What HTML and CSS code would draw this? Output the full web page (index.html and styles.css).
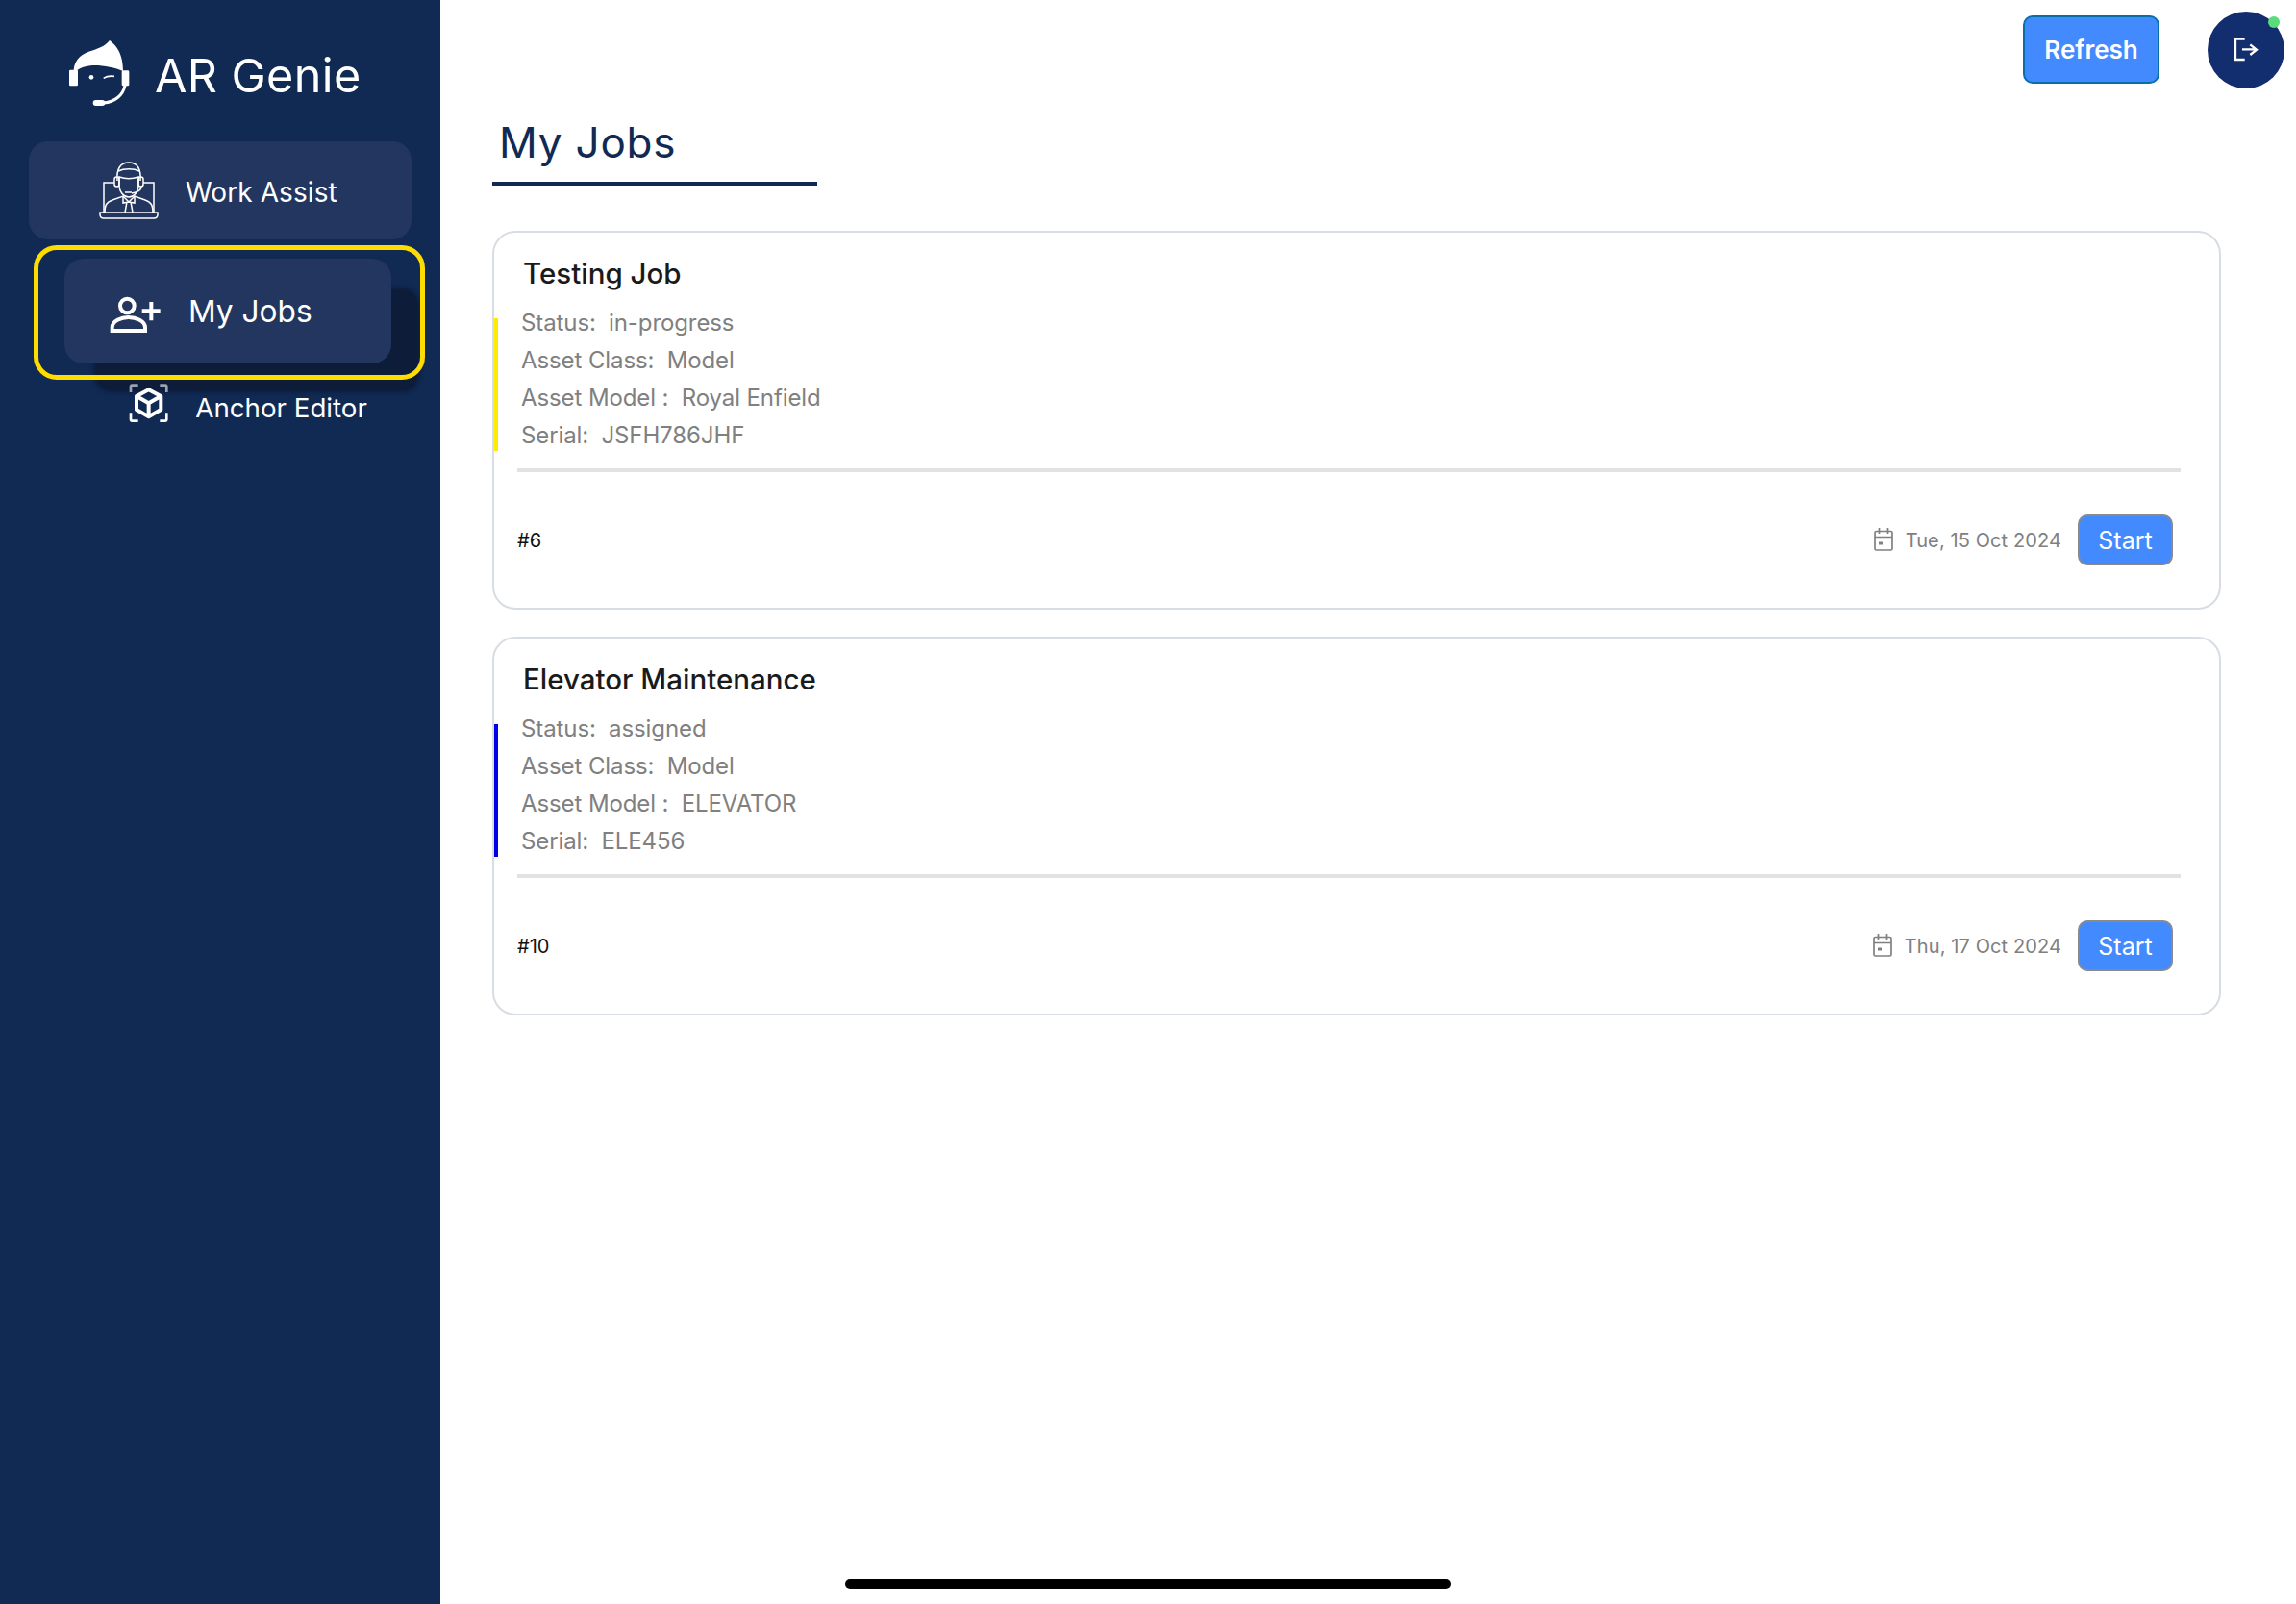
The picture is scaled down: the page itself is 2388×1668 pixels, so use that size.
FILE: index.html
```html
<!DOCTYPE html>
<html lang="en">
<head>
    <meta charset="UTF-8">
    <meta name="viewport" content="width=device-width, initial-scale=1.0">
    <title>AR Genie - My Jobs</title>
    <link rel="stylesheet" href="styles.css">
</head>
<body>
    <aside class="sidebar">
        <div class="brand">
            <svg class="brand-logo" viewBox="0 0 240 240" fill="#fff">
                <path d="M38 114C38 85 56 63 85 53c25-8 50-15 65-35 22 17 42 42 42 96-27-12-72-20-102-17-18 2-32 7-42 15z"/>
                <rect x="24" y="110" width="27" height="50" rx="4"/>
                <rect x="188" y="112" width="23" height="48" rx="4"/>
                <path fill="none" stroke="#fff" stroke-width="9" d="M198 158c-6 32-33 52-66 55"/>
                <rect x="98" y="204" width="38" height="18" rx="9"/>
                <circle cx="93" cy="133" r="7"/>
                <path fill="none" stroke="#fff" stroke-width="5" d="M131 136c9-6 20-8 34-6"/>
            </svg>
            <span class="brand-name">AR Genie</span>
        </div>
        <nav class="nav">
            <a class="nav-item nav-work">
                <svg class="icon-work" viewBox="0 0 62 60" fill="none" stroke="#fff" stroke-width="1.5">
                    <path d="M19 20c-1-12 3-19 12-19s13 7 12 19"/>
                    <path d="M20 10c6-3 16-3 22 0"/>
                    <path d="M21 16v8c0 8 5 13 10 13s10-5 10-13v-8c-6 2-14 2-20 0z"/>
                    <rect x="16" y="16" width="5" height="10" rx="2.5"/>
                    <rect x="41" y="16" width="5" height="10" rx="2.5"/>
                    <path d="M44 26c0 4-4 6-10 7"/>
                    <path d="M27 32h7"/>
                    <path d="M16 22H5v31M46 22h11v31"/>
                    <path d="M6 53c0-8 2-11 8-13l11-4 6 6 6-6 11 4c6 2 8 5 8 13"/>
                    <path d="M25 36v7l6-1 6 1v-7M29 42l-2 11M33 42l2 11"/>
                    <path d="M1 53h60v2c0 3-2 4-4 4H5c-2 0-4-1-4-4z"/>
                </svg>
                <span>Work Assist</span>
            </a>
            <a class="nav-item nav-active">
                <svg class="icon-jobs" viewBox="0 0 240 180" fill="none" stroke="#fff" stroke-width="12">
                    <circle cx="97" cy="72" r="22"/>
                    <path d="M50 150v-10c0-20 28-32 51-32s52 12 52 32v10z"/>
                    <path d="M172 60v58M143 88h57"/>
                </svg>
                <span>My Jobs</span>
            </a>
            <a class="nav-item nav-anchor">
                <svg class="icon-anchor" viewBox="40 24 130 130" fill="none" stroke="#fff" stroke-width="8">
                    <path stroke="#9aa3b5" d="M49 54V36q0-4 4-4h19M140 32h17q4 0 4 4v18"/>
                    <path d="M49 118v20q0 5 5 5h18M140 143h16q5 0 5-5v-20"/>
                    <path stroke-width="12" stroke-linejoin="round" d="M105 46l38 20v42l-38 22-38-22V66zM67 66l38 22 38-22M105 88v42"/>
                </svg>
                <span>Anchor Editor</span>
            </a>
        </nav>
        <div class="focus-ring"></div>
    </aside>

    <main class="content">
        <div class="topbar">
            <button class="refresh-btn">Refresh</button>
            <div class="logout">
                <svg class="icon-logout" viewBox="70 100 76 80" fill="none" stroke="#fff" stroke-width="7">
                    <path d="M105 108H76v64h29M97 140h43M122 125l20 16-20 16"/>
                </svg>
                <span class="online-dot"></span>
            </div>
        </div>
        <h1 class="page-title">My Jobs</h1>

        <section class="job-card">
            <h2 class="job-title">Testing Job</h2>
            <div class="job-details status-yellow">
                <p>Status:&nbsp; in-progress</p>
                <p>Asset Class:&nbsp; Model</p>
                <p>Asset Model :&nbsp; Royal Enfield</p>
                <p>Serial:&nbsp; JSFH786JHF</p>
            </div>
            <hr class="job-divider">
            <div class="job-footer">
                <span class="job-id">#6</span>
                <svg class="icon-cal" viewBox="0 0 20 24" fill="none" stroke="#808080" stroke-width="1.700">
                    <rect x="1" y="3.500" width="18" height="19.500" rx="1.500"/>
                    <path d="M1 9.500h18M5.500 0v6M14.500 0v6"/>
                    <rect fill="#808080" stroke="none" x="5" y="14.500" width="4" height="3"/>
                </svg>
                <span class="job-date">Tue, 15 Oct 2024</span>
                <button class="start-btn">Start</button>
            </div>
        </section>

        <section class="job-card">
            <h2 class="job-title">Elevator Maintenance</h2>
            <div class="job-details status-blue">
                <p>Status:&nbsp; assigned</p>
                <p>Asset Class:&nbsp; Model</p>
                <p>Asset Model :&nbsp; ELEVATOR</p>
                <p>Serial:&nbsp; ELE456</p>
            </div>
            <hr class="job-divider">
            <div class="job-footer">
                <span class="job-id">#10</span>
                <svg class="icon-cal" viewBox="0 0 20 24" fill="none" stroke="#808080" stroke-width="1.700">
                    <rect x="1" y="3.500" width="18" height="19.500" rx="1.500"/>
                    <path d="M1 9.500h18M5.500 0v6M14.500 0v6"/>
                    <rect fill="#808080" stroke="none" x="5" y="14.500" width="4" height="3"/>
                </svg>
                <span class="job-date">Thu, 17 Oct 2024</span>
                <button class="start-btn">Start</button>
            </div>
        </section>
    </main>
    <div class="home-bar"></div>
</body>
</html>
```

FILE: styles.css
```css
* {
    box-sizing: border-box;
}
body {
    margin: 0;
    height: 1668px;
    display: flex;
    overflow: hidden;
    background-color: #fff;
    font-family: Inter, "Liberation Sans", sans-serif;
}
p, h1, h2 {
    margin: 0;
    font-weight: 400;
}

/* sidebar */
.sidebar {
    position: relative;
    width: 458px;
    flex-shrink: 0;
    background-color: #102a54;
    color: #fff;
    padding: 36px 30px 0;
}
.brand {
    display: flex;
    align-items: center;
    gap: 17px;
    height: 80px;
    padding-left: 34px;
}
.brand-logo {
    width: 80px;
    height: 80px;
}
.brand-name {
    padding-top: 5px;
    font-size: 48.5px;
    letter-spacing: 0.4px;
}
.nav {
    margin-top: 31px;
}
.nav-item {
    display: flex;
    align-items: center;
}
.nav-work {
    width: 398px;
    height: 102px;
    padding-left: 73px;
    gap: 28px;
    font-size: 28px;
    letter-spacing: 0.1px;
    border-radius: 20px;
    background-color: #22365f;
}
.nav-work span {
    padding-top: 3px;
}
.icon-work {
    width: 62px;
    height: 60px;
}
.nav-active {
    width: 340px;
    height: 109px;
    margin: 20px 0 0 37px;
    padding-left: 33px;
    gap: 16px;
    font-size: 31.700px;
    border-radius: 20px;
    background-color: #22365f;
    box-shadow: 30px 30px 4px #0d1c38;
    position: relative;
}
.icon-jobs {
    width: 80px;
    height: 60px;
}
.nav-anchor {
    margin: 20px 0 0 103px;
    gap: 27px;
    font-size: 27.700px;
    position: relative;
}
.nav-anchor span {
    padding-top: 9px;
}
.icon-anchor {
    width: 43.300px;
    height: 43.300px;
}
.focus-ring {
    position: absolute;
    left: 35px;
    top: 255px;
    width: 407px;
    height: 140px;
    border: 5px solid #ffdc00;
    border-radius: 24px;
}

/* main area */
.content {
    flex: 1;
    padding: 16px 78px 0 54px;
}
.topbar {
    display: flex;
    justify-content: flex-end;
    align-items: center;
    gap: 50px;
    height: 71px;
    margin-right: -66px;
}
.refresh-btn {
    width: 142px;
    height: 71px;
    font-family: inherit;
    font-size: 26px;
    font-weight: 600;
    color: #fff;
    background-color: #448aff;
    border: 2px solid #0a6fa8;
    border-radius: 10px;
}
.logout {
    position: relative;
    width: 80px;
    height: 80px;
    border-radius: 50%;
    background-color: #132e6e;
    display: flex;
    align-items: center;
    justify-content: center;
}
.icon-logout {
    width: 25.300px;
    height: 26.700px;
}
.online-dot {
    position: absolute;
    top: 5px;
    right: 5px;
    width: 12px;
    height: 12px;
    border-radius: 50%;
    background-color: #5adc7a;
}
.page-title {
    width: 338px;
    height: 88px;
    margin-top: 18px;
    padding: 16px 0 0 7px;
    font-size: 44px;
    letter-spacing: 0.8px;
    color: #102a54;
    border-bottom: 4px solid #102a54;
}
.job-card {
    height: 394px;
    margin-top: 28px;
    padding: 22px 40px 0 24px;
    border: 2px solid #d8dde3;
    border-radius: 24px;
}
.page-title + .job-card {
    margin-top: 47px;
}
.job-title {
    padding-left: 6px;
    font-size: 29.500px;
    line-height: 40px;
    font-weight: 500;
    color: #1a1a1a;
}
.job-details {
    position: relative;
    margin-top: 12px;
    padding-left: 4px;
    font-size: 24px;
    letter-spacing: -0.1px;
    line-height: 39px;
    color: #808080;
}
.job-details::before {
    content: "";
    position: absolute;
    left: -24px;
    top: 15px;
    width: 4px;
    height: 138px;
}
.status-yellow::before {
    background-color: #ffeb00;
}
.status-blue::before {
    background-color: #0000e6;
}
.job-divider {
    height: 4px;
    margin: 15px 0 0;
    border: 0;
    background-color: #e2e2e2;
}
.job-footer {
    display: flex;
    align-items: center;
    height: 53px;
    margin-top: 44px;
    padding-right: 8px;
}
.job-id {
    flex: 1;
    font-size: 20px;
    color: #111;
}
.icon-cal {
    width: 20px;
    height: 24px;
    margin-top: -2px;
}
.job-date {
    margin: 0 17px 0 13px;
    font-size: 20px;
    letter-spacing: 0.1px;
    color: #808080;
}
.start-btn {
    width: 99px;
    height: 53px;
    font-family: inherit;
    font-size: 25px;
    color: #fff;
    background-color: #448aff;
    border: 2px solid #8a8a8a;
    border-radius: 10px;
}
.home-bar {
    position: absolute;
    left: 879px;
    top: 1642px;
    width: 630px;
    height: 10px;
    border-radius: 5px;
    background-color: #000;
}
```
